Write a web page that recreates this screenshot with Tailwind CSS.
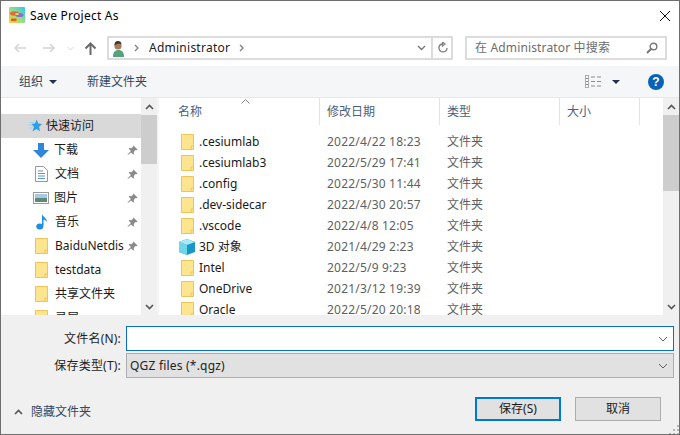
<!DOCTYPE html>
<html lang="en">
<head>
  <meta charset="UTF-8" />
  <title>Save Project As</title>
  <script src="https://cdn.jsdelivr.net/npm/@tailwindcss/browser@4"></script>
</head>
<body class="bg-white">
  <div class="w-[680px] h-[435px] flex flex-col overflow-hidden border border-[#6e6e6e] bg-white text-[12px] text-[#1a1a1a] font-['Noto_Sans','Noto_Sans_CJK_SC',sans-serif]">

    <!-- Title bar -->
    <div class="h-[30px] shrink-0 flex items-start pt-[6px] pl-[8px] pr-[5px]">
      <svg width="16" height="16" viewBox="0 0 16 16" class="mr-[5px]">
        <defs>
          <linearGradient id="logo" x1="0" y1="1" x2="1" y2="0"><stop offset="0" stop-color="#f8d820"/><stop offset="0.5" stop-color="#8fe08a"/><stop offset="1" stop-color="#2cc4f5"/></linearGradient>
        </defs>
        <rect width="16" height="16" rx="1" fill="url(#logo)"/>
        <ellipse cx="5.500" cy="6.500" rx="4.500" ry="2.200" fill="#e8663a"/>
        <ellipse cx="10.500" cy="8" rx="4" ry="2" fill="#8a6ad0"/>
        <ellipse cx="8" cy="7" rx="2" ry="1" fill="#f7e36a"/>
        <rect x="2" y="11.500" width="5.500" height="2.500" fill="#f0562a"/>
      </svg>
      <span class="text-[12px] leading-[18px] text-black tracking-[0.25px]">Save Project As</span>
      <svg width="12" height="12" viewBox="0 0 12 12" class="ml-auto mr-[3px] mt-[3px]"><path d="M1 1l10 10M11 1L1 11" stroke="#111" fill="none"/></svg>
    </div>

    <!-- Navigation -->
    <div class="h-[35px] shrink-0 flex items-start pt-[5px]">
      <div class="w-[106px] h-[24px] flex items-center pl-[12px]">
        <svg width="14" height="12" viewBox="0 0 14 12"><path d="M13 6H2M6 2L2 6l4 4" stroke="#d4d4d4" stroke-width="1.600" fill="none"/></svg>
        <svg width="14" height="12" viewBox="0 0 14 12" class="ml-[15px]"><path d="M1 6h11M8 2l4 4-4 4" stroke="#d4d4d4" stroke-width="1.600" fill="none"/></svg>
        <svg width="7" height="5" viewBox="0 0 7 5" class="ml-[11px]"><path d="M.5 1L3.500 4l3-3" stroke="#d4d4d4" fill="none"/></svg>
        <svg width="13" height="13" viewBox="0 0 13 13" class="ml-[10px]"><path d="M6.500 13V2M1.500 6.500l5-5 5 5" stroke="#6a6a6a" stroke-width="2" fill="none"/></svg>
      </div>
      <div class="w-[346px] h-[24px] flex items-center border-2 border-[#dcdcdc] pl-[3px]">
        <svg width="13" height="17" viewBox="0 0 13 17">
          <path d="M1 17c0-5 2-7 5.500-7S12 12 12 17z" fill="#55a27c"/>
          <circle cx="6" cy="6" r="3.600" fill="#a57f5c"/>
          <path d="M2.500 5.500C2.500 2 4 1 6 1s3.500 1 3.500 3.500C8 3.500 5 3.500 2.500 5.500z" fill="#3f3a34"/>
        </svg>
        <svg width="5" height="8" viewBox="0 0 5 8" class="ml-[9px]"><path d="M1 1l3 3-3 3" stroke="#808080" stroke-width="1.300" fill="none"/></svg>
        <span class="ml-[10px] text-[#222] tracking-[0.25px]">Administrator</span>
        <svg width="5" height="8" viewBox="0 0 5 8" class="ml-[9px]"><path d="M1 1l3 3-3 3" stroke="#808080" stroke-width="1.300" fill="none"/></svg>
        <svg width="9" height="6" viewBox="0 0 9 6" class="ml-auto mr-[5px]"><path d="M1 1l3.500 3.500L8 1" stroke="#777" stroke-width="1.400" fill="none"/></svg>
        <div class="w-[20px] h-full border-l-2 border-[#dcdcdc] flex items-center justify-center">
          <svg width="11" height="12" viewBox="0 0 11 12"><path d="M5 2a4 4 0 1 0 5 4M5.500 0v4L8 2z" stroke="#808080" stroke-width="1.300" fill="none"/></svg>
        </div>
      </div>
      <div class="w-[202px] h-[24px] ml-[12px] flex items-center border-2 border-[#dcdcdc] pl-[8px] pr-[7px]">
        <span class="text-[#6d6d6d] tracking-[0.15px]">在 Administrator 中搜索</span>
        <svg width="12" height="12" viewBox="0 0 12 12" class="ml-auto"><circle cx="7.500" cy="4.500" r="3.300" stroke="#777" stroke-width="1.400" fill="none"/><path d="M5 7l-4 4" stroke="#777" stroke-width="2"/></svg>
      </div>
    </div>

    <!-- Toolbar -->
    <div class="h-[32px] shrink-0 flex items-center bg-[#f5f6f7] border-b border-[#e8e8e8] text-[#33475f]">
      <span class="ml-[18px]">组织</span>
      <span class="ml-[6px] w-0 h-0 border-x-[4px] border-x-transparent border-t-[4px] border-t-[#23324a]"></span>
      <span class="ml-[30px]">新建文件夹</span>
      <svg width="17" height="13" viewBox="0 0 17 13" class="ml-auto">
        <rect x=".5" y=".5" width="3" height="12" fill="#fff" stroke="#aaa"/>
        <path d="M1 3.500h2M1 6.500h2M1 9.500h2" stroke="#888"/>
        <path d="M6 2h4M12 2h4M6 6.500h4M12 6.500h4M6 11h4M12 11h4" stroke="#8a8a8a"/>
      </svg>
      <span class="ml-[10px] w-0 h-0 border-x-[4px] border-x-transparent border-t-[4px] border-t-[#23324a]"></span>
      <span class="ml-[28px] mr-[15px] w-[16px] h-[16px] rounded-full bg-[#0a62b8] text-white text-[12px] font-bold flex items-center justify-center font-['Liberation_Sans']">?</span>
    </div>

    <!-- Main -->
    <div class="h-[217px] shrink-0 flex overflow-hidden">
      <!-- Sidebar -->
      <div class="w-[140px] shrink-0 pt-[16px] overflow-hidden">
        <div class="h-[24px] flex items-center bg-[#d9d9d9] pl-[27px]">
          <svg width="14" height="14" viewBox="0 0 14 14"><path d="M0 6h5M1 9h4M1.500 3.500h4" stroke="#9bd3f7"/><path d="M8.700.5l1.500 4 3.800.4-2.900 2.800.9 4.600-3.500-2.400-4 2.600 1.500-4.800-2.500-2.700 3.500-.5z" fill="#2d9fe6"/></svg>
          <span class="ml-[4px]">快速访问</span>
        </div>
        <div class="h-[24px] flex items-center pl-[32px]">
          <svg width="16" height="15" viewBox="0 0 16 15"><path d="M5 0h6v7h5l-8 8-8-8h5z" fill="#2e86da"/></svg>
          <span class="ml-[5px]">下载</span>
          <svg width="11" height="11" viewBox="0 0 11 11" class="ml-auto mr-[3px]"><path d="M6.500.5l4 4-1 .8-1-.3-1.800 2 .3 1.800-.8.8-2.200-2.200L1 10l-.5-.5 3.400-3.500-2.200-2.200.8-.8 1.800.3 2-1.800-.3-1z" fill="#8a8a8a"/></svg>
        </div>
        <div class="h-[24px] flex items-center pl-[34px]">
          <svg width="13" height="16" viewBox="0 0 13 16"><path d="M.500.500h8l4 4v11H.500z" fill="#fff" stroke="#9a9a9a"/><path d="M3 5h5M3 7.500h7M3 10h7M3 12.500h7" stroke="#5f93c4"/></svg>
          <span class="ml-[7px]">文档</span>
          <svg width="11" height="11" viewBox="0 0 11 11" class="ml-auto mr-[3px]"><path d="M6.500.5l4 4-1 .8-1-.3-1.800 2 .3 1.800-.8.8-2.200-2.200L1 10l-.5-.5 3.400-3.500-2.200-2.200.8-.8 1.800.3 2-1.800-.3-1z" fill="#8a8a8a"/></svg>
        </div>
        <div class="h-[24px] flex items-center pl-[32px]">
          <svg width="16" height="12" viewBox="0 0 16 12"><rect x=".5" y=".5" width="15" height="11" fill="#fff" stroke="#9a9a9a"/><rect x="2" y="2" width="12" height="4" fill="#a9c8e8"/><rect x="2" y="6" width="12" height="4" fill="#5c8a75"/></svg>
          <span class="ml-[5px]">图片</span>
          <svg width="11" height="11" viewBox="0 0 11 11" class="ml-auto mr-[3px]"><path d="M6.500.5l4 4-1 .8-1-.3-1.800 2 .3 1.800-.8.8-2.200-2.200L1 10l-.5-.5 3.400-3.500-2.200-2.200.8-.8 1.800.3 2-1.800-.3-1z" fill="#8a8a8a"/></svg>
        </div>
        <div class="h-[24px] flex items-center pl-[35px]">
          <svg width="12" height="16" viewBox="0 0 12 16"><ellipse cx="3.800" cy="12.500" rx="3.500" ry="3" fill="#1c8fe8"/><path d="M6 12V0c1 3 5 4 5 8-1-1.500-2.500-2.500-3.500-2.500V12z" fill="#1c8fe8"/></svg>
          <span class="ml-[7px]">音乐</span>
          <svg width="11" height="11" viewBox="0 0 11 11" class="ml-auto mr-[3px]"><path d="M6.500.5l4 4-1 .8-1-.3-1.800 2 .3 1.800-.8.8-2.200-2.200L1 10l-.5-.5 3.400-3.500-2.200-2.200.8-.8 1.800.3 2-1.800-.3-1z" fill="#8a8a8a"/></svg>
        </div>
        <div class="h-[24px] flex items-center pl-[34px]">
          <svg width="13" height="16" viewBox="0 0 13 16" class="shrink-0"><path d="M.500.500h12v15H.500z" fill="#fde58f" stroke="#ecc45a"/><path d="M10 15v-3h2.500" stroke="#ecc45a" fill="none"/></svg>
          <span class="ml-[7px] w-[71px] shrink-0 overflow-hidden whitespace-nowrap">BaiduNetdis</span>
          <svg width="11" height="11" viewBox="0 0 11 11" class="ml-auto mr-[3px] shrink-0"><path d="M6.500.5l4 4-1 .8-1-.3-1.800 2 .3 1.800-.8.8-2.200-2.200L1 10l-.5-.5 3.400-3.500-2.200-2.200.8-.8 1.800.3 2-1.800-.3-1z" fill="#8a8a8a"/></svg>
        </div>
        <div class="h-[24px] flex items-center pl-[34px]">
          <svg width="13" height="16" viewBox="0 0 13 16"><path d="M.500.500h12v15H.500z" fill="#fde58f" stroke="#ecc45a"/><path d="M10 15v-3h2.500" stroke="#ecc45a" fill="none"/></svg>
          <span class="ml-[7px]">testdata</span>
        </div>
        <div class="h-[24px] flex items-center pl-[34px]">
          <svg width="13" height="16" viewBox="0 0 13 16"><path d="M.500.500h12v15H.500z" fill="#fde58f" stroke="#ecc45a"/><path d="M10 15v-3h2.500" stroke="#ecc45a" fill="none"/></svg>
          <span class="ml-[7px]">共享文件夹</span>
        </div>
        <div class="h-[24px] flex items-center pl-[34px]">
          <svg width="13" height="16" viewBox="0 0 13 16"><path d="M.500.500h12v15H.500z" fill="#fde58f" stroke="#ecc45a"/><path d="M10 15v-3h2.500" stroke="#ecc45a" fill="none"/></svg>
          <span class="ml-[7px]">录屏</span>
        </div>
      </div>
      <!-- Sidebar scrollbar -->
      <div class="w-[16px] shrink-0 bg-[#f0f0f0] flex flex-col">
        <div class="h-[16px] mt-[1px] flex items-center justify-center"><svg width="9" height="6" viewBox="0 0 9 6"><path d="M1 5l3.500-3.500L8 5" stroke="#555" stroke-width="1.600" fill="none"/></svg></div>
        <div class="h-[49px] bg-[#cdcdcd]"></div>
        <div class="mt-auto h-[16px] flex items-center justify-center"><svg width="9" height="6" viewBox="0 0 9 6"><path d="M1 1l3.500 3.500L8 1" stroke="#555" stroke-width="1.600" fill="none"/></svg></div>
      </div>
      <div class="w-[2px] shrink-0 bg-[#f5f5f5]"></div>

      <!-- File list -->
      <div class="flex-1 min-w-0 overflow-hidden">
        <div class="h-[27px] flex text-[#4c607a] relative">
          <svg width="9" height="5" viewBox="0 0 9 5" class="absolute left-[82px] top-[1px]"><path d="M.5 4.500l4-4 4 4" stroke="#8a8a8a" fill="none"/></svg>
          <div class="w-[161px] pl-[19px] pt-[5px] border-r border-[#e3e3e3]">名称</div>
          <div class="w-[120px] pl-[7px] pt-[5px] border-r border-[#e3e3e3]">修改日期</div>
          <div class="w-[120px] pl-[7px] pt-[5px] border-r border-[#e3e3e3]">类型</div>
          <div class="w-[80px] pl-[7px] pt-[5px] border-r border-[#e3e3e3]">大小</div>
        </div>
        <div class="pt-[6px] text-[#1a1a1a]">
          <div class="h-[21px] flex items-center"><svg width="13" height="16" viewBox="0 0 13 16" class="ml-[22px] shrink-0"><path d="M.500.500h12v15H.500z" fill="#fde58f" stroke="#ecc45a"/><path d="M10 15v-3h2.500" stroke="#ecc45a" fill="none"/></svg><span class="ml-[5px] w-[128px]">.cesiumlab</span><span class="w-[120px] text-[#5f5f5f] tracking-[0.2px]">2022/4/22 18:23</span><span class="text-[#5f5f5f]">文件夹</span></div>
          <div class="h-[21px] flex items-center"><svg width="13" height="16" viewBox="0 0 13 16" class="ml-[22px] shrink-0"><path d="M.500.500h12v15H.500z" fill="#fde58f" stroke="#ecc45a"/><path d="M10 15v-3h2.500" stroke="#ecc45a" fill="none"/></svg><span class="ml-[5px] w-[128px]">.cesiumlab3</span><span class="w-[120px] text-[#5f5f5f] tracking-[0.2px]">2022/5/29 17:41</span><span class="text-[#5f5f5f]">文件夹</span></div>
          <div class="h-[21px] flex items-center"><svg width="13" height="16" viewBox="0 0 13 16" class="ml-[22px] shrink-0"><path d="M.500.500h12v15H.500z" fill="#fde58f" stroke="#ecc45a"/><path d="M10 15v-3h2.500" stroke="#ecc45a" fill="none"/></svg><span class="ml-[5px] w-[128px]">.config</span><span class="w-[120px] text-[#5f5f5f] tracking-[0.2px]">2022/5/30 11:44</span><span class="text-[#5f5f5f]">文件夹</span></div>
          <div class="h-[21px] flex items-center"><svg width="13" height="16" viewBox="0 0 13 16" class="ml-[22px] shrink-0"><path d="M.500.500h12v15H.500z" fill="#fde58f" stroke="#ecc45a"/><path d="M10 15v-3h2.500" stroke="#ecc45a" fill="none"/></svg><span class="ml-[5px] w-[128px]">.dev-sidecar</span><span class="w-[120px] text-[#5f5f5f] tracking-[0.2px]">2022/4/30 20:57</span><span class="text-[#5f5f5f]">文件夹</span></div>
          <div class="h-[21px] flex items-center"><svg width="13" height="16" viewBox="0 0 13 16" class="ml-[22px] shrink-0"><path d="M.500.500h12v15H.500z" fill="#fde58f" stroke="#ecc45a"/><path d="M10 15v-3h2.500" stroke="#ecc45a" fill="none"/></svg><span class="ml-[5px] w-[128px]">.vscode</span><span class="w-[120px] text-[#5f5f5f] tracking-[0.2px]">2022/4/8 12:05</span><span class="text-[#5f5f5f]">文件夹</span></div>
          <div class="h-[21px] flex items-center"><svg width="16" height="16" viewBox="0 0 16 16" class="ml-[20px] shrink-0"><path d="M8 0l8 3v10l-8 3-8-3V3z" fill="#1796c8"/><path d="M8 0l8 3-8 3-8-3z" fill="#a8eaf5"/><path d="M0 3l8 3v10l-8-3z" fill="#6fd6ea"/></svg><span class="ml-[4px] w-[128px]">3D 对象</span><span class="w-[120px] text-[#5f5f5f] tracking-[0.2px]">2021/4/29 2:23</span><span class="text-[#5f5f5f]">文件夹</span></div>
          <div class="h-[21px] flex items-center"><svg width="13" height="16" viewBox="0 0 13 16" class="ml-[22px] shrink-0"><path d="M.500.500h12v15H.500z" fill="#fde58f" stroke="#ecc45a"/><path d="M10 15v-3h2.500" stroke="#ecc45a" fill="none"/></svg><span class="ml-[5px] w-[128px]">Intel</span><span class="w-[120px] text-[#5f5f5f] tracking-[0.2px]">2022/5/9 9:23</span><span class="text-[#5f5f5f]">文件夹</span></div>
          <div class="h-[21px] flex items-center"><svg width="13" height="16" viewBox="0 0 13 16" class="ml-[22px] shrink-0"><path d="M.500.500h12v15H.500z" fill="#fde58f" stroke="#ecc45a"/><path d="M10 15v-3h2.500" stroke="#ecc45a" fill="none"/></svg><span class="ml-[5px] w-[128px]">OneDrive</span><span class="w-[120px] text-[#5f5f5f] tracking-[0.2px]">2021/3/12 19:39</span><span class="text-[#5f5f5f]">文件夹</span></div>
          <div class="h-[21px] flex items-center"><svg width="13" height="16" viewBox="0 0 13 16" class="ml-[22px] shrink-0"><path d="M.500.500h12v15H.500z" fill="#fde58f" stroke="#ecc45a"/><path d="M10 15v-3h2.500" stroke="#ecc45a" fill="none"/></svg><span class="ml-[5px] w-[128px]">Oracle</span><span class="w-[120px] text-[#5f5f5f] tracking-[0.2px]">2022/5/20 20:18</span><span class="text-[#5f5f5f]">文件夹</span></div>
        </div>
      </div>
      <!-- List scrollbar -->
      <div class="w-[16px] shrink-0 bg-[#f0f0f0] flex flex-col">
        <div class="h-[16px] mt-[1px] flex items-center justify-center"><svg width="9" height="6" viewBox="0 0 9 6"><path d="M1 5l3.500-3.500L8 5" stroke="#555" stroke-width="1.600" fill="none"/></svg></div>
        <div class="h-[76px] bg-[#cdcdcd]"></div>
        <div class="mt-auto h-[16px] flex items-center justify-center"><svg width="9" height="6" viewBox="0 0 9 6"><path d="M1 1l3.500 3.500L8 1" stroke="#555" stroke-width="1.600" fill="none"/></svg></div>
      </div>
    </div>

    <!-- Footer form -->
    <div class="flex-1 bg-[#f0f0f0] flex flex-col pr-[5px] relative">
      <div class="mt-[11px] h-[25px] flex items-center">
        <label class="w-[120px] text-right text-[#222] pt-[1px] tracking-[0.2px]">文件名(N):</label>
        <div class="ml-[5px] flex-1 h-[25px] bg-white border border-[#0a6cc4] flex items-center justify-end pr-[5px]">
          <svg width="10" height="6" viewBox="0 0 10 6"><path d="M1 1l4 4 4-4" stroke="#606060" fill="none"/></svg>
        </div>
      </div>
      <div class="mt-[2px] h-[25px] flex items-center">
        <label class="w-[120px] text-right text-[#222] pt-[1px] tracking-[0.2px]">保存类型(T):</label>
        <div class="ml-[5px] flex-1 h-[25px] bg-[#e1e1e1] border border-[#adadad] flex items-center justify-between pl-[3px] pr-[5px] text-[#222]">
          <span class="tracking-[0.2px]">QGZ files (*.qgz)</span>
          <svg width="10" height="6" viewBox="0 0 10 6"><path d="M1 1l4 4 4-4" stroke="#606060" fill="none"/></svg>
        </div>
      </div>
      <div class="mt-[19px] flex items-center">
        <svg width="9" height="6" viewBox="0 0 9 6" class="ml-[13px] mt-[5px]"><path d="M1 5l3.500-3.500L8 5" stroke="#555" stroke-width="1.600" fill="none"/></svg>
        <span class="ml-[8px] mt-[6px] text-[#33475f]">隐藏文件夹</span>
        <button class="ml-auto w-[86px] h-[24px] bg-[#e1e1e1] border-2 border-[#0078d7] text-[#1a1a1a]">保存(S)</button>
        <button class="ml-[14px] mr-[13px] w-[86px] h-[24px] bg-[#e1e1e1] border border-[#adadad] text-[#1a1a1a]">取消</button>
      </div>
      <svg width="10" height="10" viewBox="0 0 10 10" class="absolute right-0 bottom-0"><path d="M8 1h2v2H8zM4 5h2v2H4zM8 5h2v2H8zM0 9h2v1H0zM4 9h2v1H4zM8 9h2v1H8z" fill="#b5b5b5"/></svg>
    </div>
  </div>
</body>
</html>
